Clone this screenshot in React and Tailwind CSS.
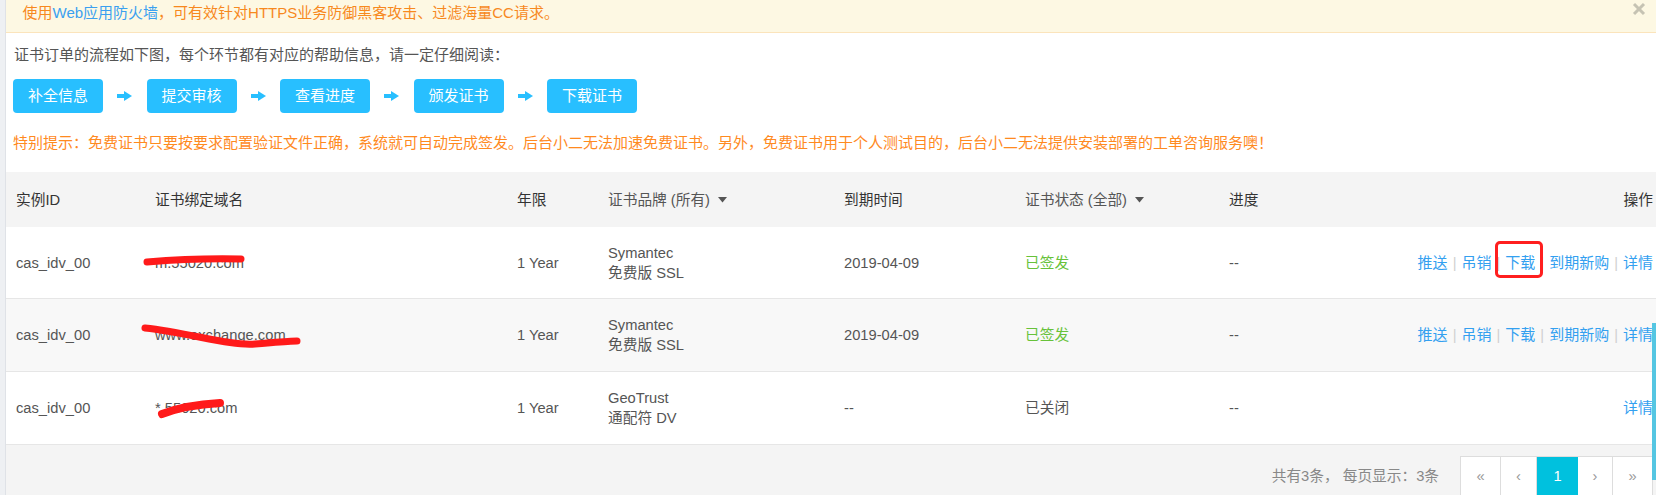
import React from "react";

const FONT = { fontFamily: '"Liberation Sans", "Noto Sans CJK SC", sans-serif' };

function Arrow() {
  return (
    <div className="w-[43.5px] flex items-center justify-center">
      <svg width="15" height="10" viewBox="0 0 15 10">
        <rect x="0" y="3" width="8" height="4" fill="#28bfff" />
        <polygon points="7,0 15,5 7,10" fill="#28bfff" />
      </svg>
    </div>
  );
}

function Caret() {
  return (
    <svg width="9" height="6" viewBox="0 0 9 6" className="ml-[8px]">
      <polygon points="0,0 9,0 4.5,5.5" fill="#555" />
    </svg>
  );
}

function Sep() {
  return <span className="mx-[5px] text-[#d0d0d0]">|</span>;
}

function Link({ children, boxed }) {
  return (
    <span className="relative text-[#33a0f0] text-[15px]">
      {children}
      {boxed && (
        <span className="absolute -left-[10px] -right-[8px] -top-[12px] -bottom-[5px] border-[3px] border-[#ff1f1f] rounded-[5px]" />
      )}
    </span>
  );
}

const rows = [
  {
    domain: "m.55020.com",
    brand: "Symantec",
    type: "免费版 SSL",
    expire: "2019-04-09",
    status: "已签发",
    green: true,
    full: true,
    boxed: true,
    h: "h-[72px]",
    bg: "bg-white",
  },
  {
    domain: "www.exchange.com",
    brand: "Symantec",
    type: "免费版 SSL",
    expire: "2019-04-09",
    status: "已签发",
    green: true,
    full: true,
    h: "h-[73px]",
    bg: "bg-[#f8f8f8]",
  },
  {
    domain: "*.55020.com",
    brand: "GeoTrust",
    type: "通配符 DV",
    expire: "--",
    status: "已关闭",
    green: false,
    full: false,
    h: "h-[73px]",
    bg: "bg-white",
  },
];

const GRID = "grid grid-cols-[139px_362px_91px_236px_181px_204px_1fr] pl-[10px] pr-[3px] items-center";

export default function App() {
  return (
    <div className="relative w-[1656px] h-[495px] overflow-hidden bg-white flex text-[14.7px] leading-[20px]" style={FONT}>
      <div className="w-[5px] shrink-0 bg-[#eef0f3]" />
      <div className="flex-1 flex flex-col border-l border-[#dfe2e7] min-w-0">
        {/* banner */}
        <div className="relative h-[33px] shrink-0 bg-[#fdf8e3] border-b border-[#fbe4bc] flex items-center pl-[16.5px] pb-[6px] text-[#f7891e] text-[15px]">
          <span>
            使用<span className="text-[#3aa0f0]">Web应用防火墙</span>，可有效针对HTTPS业务防御黑客攻击、过滤海量CC请求。
          </span>
          <svg width="14" height="14" viewBox="0 0 14 14" className="absolute right-[10px] top-[2px]">
            <line x1="2" y1="2" x2="12" y2="12" stroke="#c6c3b3" strokeWidth="3" />
            <line x1="12" y1="2" x2="2" y2="12" stroke="#c6c3b3" strokeWidth="3" />
          </svg>
        </div>

        {/* intro */}
        <div className="px-[7px] pt-[12px]">
          <div className="h-[20px] text-[#555] pl-[1px] text-[15px]">证书订单的流程如下图，每个环节都有对应的帮助信息，请一定仔细阅读：</div>
          <div className="mt-[14px] flex items-center h-[34px]">
            {["补全信息", "提交审核", "查看进度", "颁发证书", "下载证书"].map((s, i) => (
              <React.Fragment key={s}>
                {i > 0 && <Arrow />}
                <div className="w-[90px] h-[34px] rounded-[4px] bg-[#28bfff] text-white text-[15px] flex items-center justify-center">
                  {s}
                </div>
              </React.Fragment>
            ))}
          </div>
          <div className="mt-[20px] h-[20px] text-[#ff8a1f] whitespace-nowrap text-[15px]">
            特别提示：免费证书只要按要求配置验证文件正确，系统就可自动完成签发。后台小二无法加速免费证书。另外，免费证书用于个人测试目的，后台小二无法提供安装部署的工单咨询服务噢！
          </div>
        </div>

        {/* table */}
        <div className="mt-[19px] flex flex-col">
          <div className={`${GRID} h-[55px] bg-[#f4f4f4] text-[#333]`}>
            <div>实例ID</div>
            <div>证书绑定域名</div>
            <div>年限</div>
            <div className="flex items-center text-[#555]">证书品牌 (所有)<Caret /></div>
            <div>到期时间</div>
            <div className="flex items-center text-[#555]">证书状态 (全部)<Caret /></div>
            <div className="flex justify-between whitespace-nowrap">
              <span>进度</span>
              <span>操作</span>
            </div>
          </div>
          {rows.map((r, i) => (
            <div key={i} className={`${GRID} ${r.h} ${r.bg} border-b border-[#e6e6e6] text-[#555]`}>
              <div>cas_idv_00</div>
              <div>{r.domain}</div>
              <div>1 Year</div>
              <div className="flex flex-col">
                <span>{r.brand}</span>
                <span>{r.type}</span>
              </div>
              <div>{r.expire}</div>
              <div className={r.green ? "text-[#67c23a]" : ""}>{r.status}</div>
              <div className="flex justify-between items-center whitespace-nowrap">
                <span>--</span>
                {r.full ? (
                  <span className="flex items-center">
                    <Link>推送</Link>
                    <Sep />
                    <Link>吊销</Link>
                    <Sep />
                    <Link boxed={r.boxed}>下载</Link>
                    <Sep />
                    <Link>到期新购</Link>
                    <Sep />
                    <Link>详情</Link>
                  </span>
                ) : (
                  <Link>详情</Link>
                )}
              </div>
            </div>
          ))}
          {/* footer */}
          <div className="h-[60px] bg-[#f4f4f4] flex justify-end items-start pt-[11px] pr-[3px]">
            <div className="h-[40px] flex items-center text-[#888] mr-[21px] whitespace-nowrap">共有3条，&nbsp;每页显示：3条</div>
            <div className="flex h-[40px] bg-white border border-[#ddd] text-[#999]">
              <div className="w-[40px] flex items-center justify-center border-r border-[#ddd]">«</div>
              <div className="w-[36px] flex items-center justify-center border-r border-[#ddd]">‹</div>
              <div className="w-[41px] flex items-center justify-center bg-[#00c1de] text-white">1</div>
              <div className="w-[35px] flex items-center justify-center border-r border-[#ddd]">›</div>
              <div className="w-[39px] flex items-center justify-center">»</div>
            </div>
          </div>
        </div>
      </div>

      {/* scribbles */}
      <svg className="absolute left-0 top-0 pointer-events-none" width="1656" height="495">
        <path d="M147 262 Q 195 258 241 259" stroke="#ff1a1a" strokeWidth="7" fill="none" strokeLinecap="round" />
        <path d="M145 328 C 190 333, 230 346, 255 344 S 290 341, 297 341" stroke="#ff1a1a" strokeWidth="7" fill="none" strokeLinecap="round" />
        <path d="M162 414 Q 185 405 220 403" stroke="#ff1a1a" strokeWidth="8" fill="none" strokeLinecap="round" />
      </svg>

      {/* scroll indicator */}
      <div className="absolute right-0 top-[323px] w-[4px] h-[157px] bg-[#55c6e2]" />
    </div>
  );
}
